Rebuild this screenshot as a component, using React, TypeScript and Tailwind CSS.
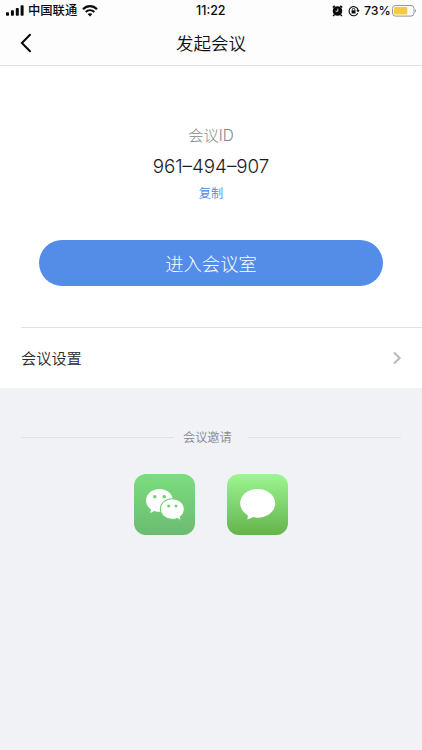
const SignalIcon = () => (
  <svg width="18" height="11" viewBox="0 0 18 11" fill="#0a0a0a">
    <rect x="0" y="7.3" width="3" height="3.5" rx="0.8" />
    <rect x="4.9" y="5.3" width="3" height="5.5" rx="0.8" />
    <rect x="9.8" y="3" width="3" height="7.8" rx="0.8" />
    <rect x="14.6" y="0.3" width="3" height="10.5" rx="0.8" />
  </svg>
);

const WifiIcon = () => (
  <svg width="16" height="12" viewBox="0 0 16 12" fill="none" stroke="#0a0a0a">
    <path d="M1 4.2C5 0.1 11 0.1 15 4.2" strokeWidth="2.2" />
    <path d="M3.7 7C6.2 4.6 9.8 4.6 12.3 7" strokeWidth="2" />
    <path d="M8 11.6L5.6 9.1C7 7.9 9 7.9 10.4 9.1Z" fill="#0a0a0a" stroke="none" />
  </svg>
);

const AlarmIcon = () => (
  <svg width="11" height="12" viewBox="0 0 11 12">
    <path d="M0.8 2.5L2.7 0.9M10.2 2.5L8.3 0.9M2.3 9.7L1.1 11M8.7 9.7L9.9 11" stroke="#0a0a0a" strokeWidth="1.5" />
    <circle cx="5.5" cy="6" r="4.8" fill="#0a0a0a" />
    <path d="M5.8 3.6V6.3H3.6" fill="none" stroke="#fff" strokeWidth="0.8" />
  </svg>
);

const LockIcon = () => (
  <svg width="12" height="12" viewBox="0 0 12 12" fill="none" stroke="#0a0a0a">
    <path d="M9.8 8.2A4.6 4.6 0 1 1 10.1 5" strokeWidth="1.1" />
    <path d="M8.3 5.1H11.7L10 7.5Z" fill="#0a0a0a" stroke="none" />
    <rect x="3.6" y="5.3" width="3.9" height="3.2" fill="#0a0a0a" stroke="none" />
    <path d="M4.3 5.5V4.5A1.25 1.25 0 0 1 6.8 4.5V5.5" strokeWidth="0.9" />
  </svg>
);

const BatteryIcon = () => (
  <svg width="25" height="12" viewBox="0 0 25 12">
    <rect x="0.5" y="0.5" width="21.5" height="10.6" rx="3" fill="none" stroke="#96969a" />
    <rect x="2" y="2" width="13.3" height="7.6" rx="1.3" fill="#f7ca45" />
    <path d="M23.1 4V7.6C24.5 7 24.5 4.6 23.1 4Z" fill="#96969a" />
  </svg>
);

const WechatIcon = () => (
  <svg width="61" height="61" viewBox="0 0 61 61">
    <path
      d="M25.5 15C18 15 12 20 12 26.5C12 30.2 14 33.3 17 35.4L16.2 39L20.3 36.9C22 37.5 23.7 37.8 25.5 37.8C33 37.8 39 32.9 39 26.5S33 15 25.5 15Z"
      fill="#fff"
    />
    <path
      d="M38.3 24.7C31.6 24.7 26.4 29.2 26.4 35S31.6 45.3 38.3 45.3C40 45.3 41.6 45 43 44.4L47.1 46.4L46.3 42.9C48.8 41 50.3 38.3 50.3 35C50.3 29.2 45 24.7 38.3 24.7Z"
      fill="#fff"
      stroke="#73cd77"
      strokeWidth="1.1"
    />
    <g fill="#73cd77">
      <circle cx="20.8" cy="22.7" r="1.8" />
      <circle cx="30.2" cy="22.7" r="1.8" />
      <circle cx="34.7" cy="31.9" r="1.5" />
      <circle cx="42" cy="31.9" r="1.5" />
    </g>
  </svg>
);

const MessageIcon = () => (
  <svg width="61" height="61" viewBox="0 0 61 61" fill="#fff">
    <path d="M30.7 15C20.9 15 13.2 21.3 13.2 29.3C13.2 34.2 16.1 38.5 20.5 41.1C21.2 43.1 20.7 44.6 19.9 45.4C22.3 45.3 24.4 44.2 25.8 43.1C27.4 43.5 29 43.7 30.7 43.7C40.4 43.7 48.2 37.3 48.2 29.3S40.4 15 30.7 15Z" />
  </svg>
);

const StatusBar = () => (
  <div className="grid h-5 grid-cols-[196px_30px_1fr] items-center whitespace-nowrap leading-5 text-[#0a0a0a]">
    <div className="flex items-center pl-1.5">
      <SignalIcon />
      <span className="ml-1 mr-[5px] w-[49px] pt-px text-[12.3px] font-medium">中国联通</span>
      <WifiIcon />
    </div>
    <span className="pt-px text-[12.5px] font-medium">11:22</span>
    <div className="flex items-center pl-[106px]">
      <AlarmIcon />
      <span className="ml-[5px] mr-[4px]">
        <LockIcon />
      </span>
      <span className="w-[28px] pt-px text-[12.3px] font-[450]">73%</span>
      <BatteryIcon />
    </div>
  </div>
);

const App = () => {
  return (
    <div className="flex h-[750px] w-[422px] flex-col overflow-hidden bg-[#f1f2f6] font-[Inter,'Noto_Sans_CJK_SC',sans-serif]">
      <header className="h-[66px] shrink-0 border-b border-[#e2e2e2] bg-[#fdfdfd]">
        <StatusBar />
        <div className="grid h-[46px] grid-cols-[1fr_auto_1fr] items-center">
          <button className="pl-5">
            <svg width="12" height="20" viewBox="0 0 12 20" fill="none" stroke="#0a0a0a" strokeWidth="2">
              <path d="M10 1.7L1.9 10L10 18.3" strokeLinecap="round" />
            </svg>
          </button>
          <h1 className="pt-px text-[17.5px] font-[350] leading-6 text-[#111]">发起会议</h1>
        </div>
      </header>

      <main className="h-[322px] shrink-0 bg-white">
        <div className="flex flex-col items-center pt-[58px]">
          <span className="text-[15.3px] font-light leading-6 text-[#858585]">会议ID</span>
          <span className="mt-[7px] text-[18.8px] font-[330] leading-6 text-[#1c1c1c]">961–494–907</span>
          <button className="mt-[5px] text-[12.2px] font-[350] leading-5 text-[#4a86e0]">复制</button>
        </div>
        <button className="mx-auto mt-9 block h-[46px] w-[344px] rounded-full bg-[#548de8] pt-[3px] text-[18.3px] font-light text-white">
          进入会议室
        </button>
        <div className="ml-[21px] mt-[41px] flex h-[61px] items-center justify-between border-t border-[#e2e2e2] pr-5">
          <span className="pt-px text-[15.2px] font-[350] leading-6 text-[#2c2c2c]">会议设置</span>
          <svg width="10" height="14" viewBox="0 0 10 14" fill="none" stroke="#b9b9b9" strokeWidth="2">
            <path d="M2 1.5L7.7 7L2 12.5" />
          </svg>
        </div>
      </main>

      <section className="px-[21px] pt-[39px]">
        <div className="flex h-5 items-center">
          <div className="h-px w-[153px] bg-[#e1e2e5]" />
          <span className="ml-[9px] mr-4 w-[49px] whitespace-nowrap pt-px text-[12.2px] font-[350] leading-5 text-[#88888c]">
            会议邀请
          </span>
          <div className="h-px w-[153px] bg-[#e1e2e5]" />
        </div>
        <div className="mt-[27px] flex justify-center gap-8">
          <button className="size-[61px] rounded-[12px] bg-linear-to-b from-[#7bdd7d] to-[#6bbb70]">
            <WechatIcon />
          </button>
          <button className="size-[61px] rounded-[12px] bg-linear-to-b from-[#9cf792] to-[#65b34b]">
            <MessageIcon />
          </button>
        </div>
      </section>
    </div>
  );
};

export default App;
